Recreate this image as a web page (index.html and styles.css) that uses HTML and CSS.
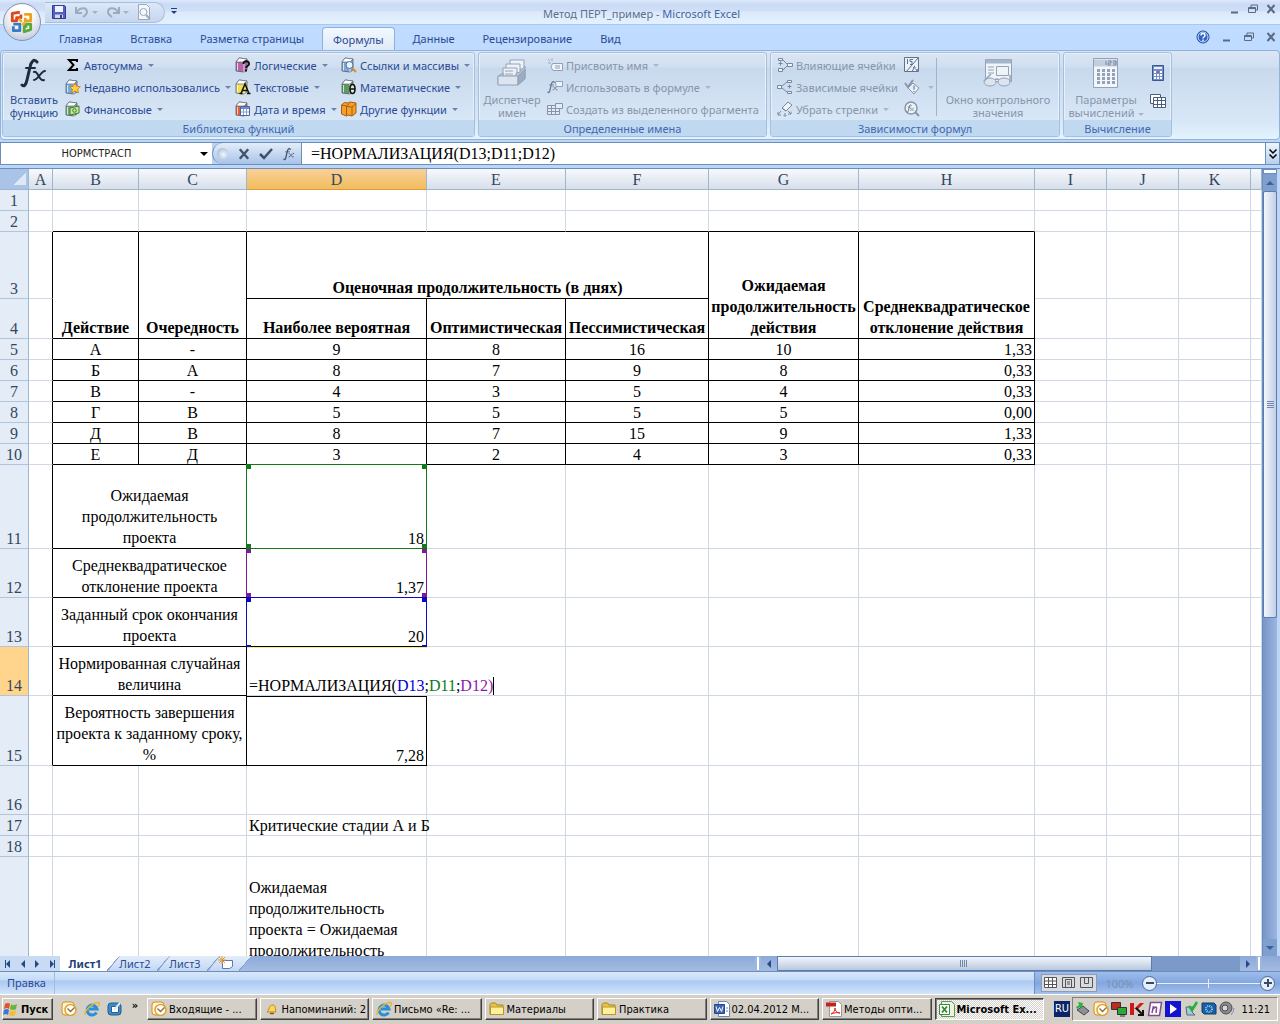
FILE: index.html
```html
<!DOCTYPE html>
<html lang="ru">
<head>
    <meta charset="UTF-8">
    <meta name="viewport" content="width=device-width, initial-scale=1.0">
    <title>Метод ПЕРТ_пример - Microsoft Excel</title>
    <link rel="stylesheet" href="styles.css">
</head>
<body>

<!-- Shared icons -->
<svg class="sprite" aria-hidden="true">
    <symbol id="book" viewBox="0 0 16 16">
        <path d="M1 5l3-4 8 1v11l-3 2-8-1z" fill="currentColor" stroke="#555b70" stroke-width=".8"/>
        <path d="M1 5l3-4 8 1-3 3z" fill="#fff" stroke="#666c80" stroke-width=".7"/>
        <path d="M2.500 6v7.500M9 5v10" stroke="#fff" stroke-width="1" opacity=".7"/>
    </symbol>
    <symbol id="fx" viewBox="0 0 28 30">
        <path d="M17 4c-3-4-6 0-7 5L7 22c-1 5-3 7-5 5" fill="none" stroke="currentColor" stroke-width="3" stroke-linecap="round"/>
        <path d="M6 10h9M14 14c4-2 5 10 10 8M25 13c-4 0-7 9-11 9" fill="none" stroke="currentColor" stroke-width="2" stroke-linecap="round"/>
    </symbol>
    <symbol id="outlook" viewBox="0 0 16 16">
        <rect x="1" y="1" width="12" height="13" rx="3" fill="#fff3d2" stroke="#d98b1f"/>
        <circle cx="9.500" cy="9" r="5.500" fill="#fff" stroke="#e6a12c" stroke-width="1.500"/>
        <path d="M6.500 7.500l3 3 4-4" fill="none" stroke="#8b6a35" stroke-width="1.300"/>
    </symbol>
    <symbol id="ie" viewBox="0 0 16 16">
        <path d="M12.500 11.500A5 5 0 1 1 13 8H5" fill="none" stroke="#2a8fd8" stroke-width="3"/>
        <path d="M1 14C0 10 9 1 15 1.500c1 1 0 3-1 4" fill="none" stroke="#e8b62e" stroke-width="1.400"/>
    </symbol>
    <symbol id="folder" viewBox="0 0 16 16">
        <path d="M1 3.500l1.500-1.500h4l1.500 2h6v9.500H1z" fill="#e9c440" stroke="#a98620"/>
        <path d="M1.500 13.500V6h13v7.500z" fill="#ffef9c" stroke="#b8952c"/>
    </symbol>
    <symbol id="min" viewBox="0 0 10 10"><path d="M1 8.500h7" stroke="currentColor" stroke-width="2"/></symbol>
    <symbol id="restore" viewBox="0 0 10 10">
        <path d="M3 3V1h6.500v5H7.500" fill="none" stroke="currentColor"/>
        <path d="M.5 3.500h7v5h-7zM.5 4.500h7" fill="none" stroke="currentColor"/>
    </symbol>
    <symbol id="close" viewBox="0 0 10 10"><path d="M1.500 1l7 8M8.500 1l-7 8" stroke="currentColor" stroke-width="2"/></symbol>
</svg>

<!-- Title bar -->
<header class="titlebar">
    <button class="office-btn" aria-label="Office">
        <svg viewBox="0 0 24 24" width="26" height="26" fill="none" stroke-width="2.600" stroke-linejoin="round">
            <path d="M10 3L3 4v7h4V8h4V5" stroke="#dc4a1c"/>
            <path d="M14 5h6v6h-5V8" stroke="#f0a21e"/>
            <path d="M4 14h6v6H4v-4" stroke="#3a78c8"/>
            <path d="M14 14h6v5l-6 2v-5h3" stroke="#5aa83a"/>
            <path d="M9 9l3 3M15 12l-3 3" stroke="#e8b33c"/>
        </svg>
    </button>
    <div class="quick-access">
        <button aria-label="Сохранить">
            <svg width="16" height="16" viewBox="0 0 16 16"><path d="M1.500 1.500h12l1 1v12h-13z" fill="#5560c0" stroke="#343a90"/><path d="M4 2h8v6H4z" fill="#eef2ff"/><path d="M4 10.500h8V14H4z" fill="#d5d9ee"/><path d="M9 11h2v3H9z" fill="#343a90"/></svg>
        </button>
        <button disabled aria-label="Отменить">
            <svg width="16" height="16" viewBox="0 0 16 16"><path d="M2 3v6h6M3 8c3-5 10-5 10 0 0 2-1 3-4 5" fill="none" stroke="#9cabc4" stroke-width="2"/></svg>
            <i class="caret"></i>
        </button>
        <button disabled aria-label="Вернуть">
            <svg width="16" height="16" viewBox="0 0 16 16"><path d="M14 3v6H8M13 8C10 3 3 3 3 8c0 2 1 3 4 5" fill="none" stroke="#9cabc4" stroke-width="2"/></svg>
            <i class="caret"></i>
        </button>
        <button disabled aria-label="Просмотр">
            <svg width="16" height="16" viewBox="0 0 16 16" fill="#f4f7fb" stroke="#9aa8bd"><path d="M2.500.5h8l3 3v12h-11z"/><circle cx="7.500" cy="8" r="3.500"/><path d="M10 11l4 4" stroke-width="2"/></svg>
        </button>
    </div>
    <button class="customize" aria-label="Настройка панели"><i class="caret dark"></i></button>
    <h1 class="title">Метод ПЕРТ_пример - <span>Microsoft Excel</span></h1>
    <div class="win-buttons">
        <button aria-label="Свернуть"><svg width="10" height="10"><use href="#min"/></svg></button>
        <button aria-label="Восстановить"><svg width="10" height="10"><use href="#restore"/></svg></button>
        <button aria-label="Закрыть"><svg width="10" height="10"><use href="#close"/></svg></button>
    </div>
</header>

<!-- Ribbon tabs -->
<nav class="tabs">
    <a href="#">Главная</a>
    <a href="#">Вставка</a>
    <a href="#">Разметка страницы</a>
    <a href="#" class="active">Формулы</a>
    <a href="#">Данные</a>
    <a href="#">Рецензирование</a>
    <a href="#">Вид</a>
    <div class="win-buttons doc">
        <button aria-label="Справка">
            <svg width="14" height="14" viewBox="0 0 14 14"><circle cx="7" cy="7" r="6" fill="#2d64c8" stroke="#1d3f8f"/><circle cx="7" cy="7" r="5" fill="none" stroke="#cfe0ff"/><path d="M5 5.500c0-3 4-2.500 4 0 0 1.500-2 1.500-2 3M7 9.500v1.500" fill="none" stroke="#fff" stroke-width="1.500"/></svg>
        </button>
        <button aria-label="Свернуть окно"><svg width="10" height="10"><use href="#min"/></svg></button>
        <button aria-label="Восстановить окно"><svg width="10" height="10"><use href="#restore"/></svg></button>
        <button aria-label="Закрыть окно"><svg width="10" height="10"><use href="#close"/></svg></button>
    </div>
</nav>

<!-- Ribbon -->
<div class="ribbon">
    <section class="group library">
        <div class="group-body">
            <button class="big"><svg width="28" height="30" class="ink"><use href="#fx"/></svg>Вставить<br>функцию</button>
            <div class="col col-main">
                <button><svg width="16" height="16" viewBox="0 0 16 16"><path d="M12 5V3H4l4.500 5L4 13h8v-2" fill="none" stroke="#000" stroke-width="2"/></svg>Автосумма<i class="caret"></i></button>
                <button><svg width="16" height="16" viewBox="0 0 16 16"><use href="#book" color="#6fb0e0"/><path d="M10 4l1.700 3.300 3.600.4-2.700 2.500.8 3.800-3.400-2-3.400 2 .8-3.800-2.700-2.500 3.600-.4z" fill="#ffd23c" stroke="#c8741c" stroke-width=".8"/></svg>Недавно использовались<i class="caret"></i></button>
                <button><svg width="16" height="16" viewBox="0 0 16 16"><use href="#book" color="#6fb070"/><path d="M5 7l9-2v7l-9 2z" fill="#c8e89a" stroke="#3d7a35"/><circle cx="9.500" cy="9.500" r="1.800" fill="none" stroke="#3d7a35"/></svg>Финансовые<i class="caret"></i></button>
            </div>
            <div class="col col-logic">
                <button><svg width="16" height="16" viewBox="0 0 16 16"><use href="#book" color="#b565a8"/><path d="M8.500 7c0-4 5.500-3.500 5.500 0 0 2-3 2-3 4M11 12.500v2" fill="none" stroke="#111" stroke-width="2"/></svg>Логические<i class="caret"></i></button>
                <button><svg width="16" height="16" viewBox="0 0 16 16"><use href="#book" color="#f2e04a"/><path d="M6 14.500L10 5l4 9.500M7.500 11.500h5M4.500 14.500h3M12 14.500h3.500" fill="none" stroke="#111" stroke-width="1.500"/></svg>Текстовые<i class="caret"></i></button>
                <button><svg width="16" height="16" viewBox="0 0 16 16"><use href="#book" color="#e0603a"/><path d="M5.500 5.500h9v9h-9z" fill="#fff" stroke="#4a64a0"/><path d="M6 7h8" stroke="#6c8ed0" stroke-width="2"/><path d="M8.500 8v6M11.500 8v6M6 11h8" stroke="#8aa0c8"/></svg>Дата и время<i class="caret"></i></button>
            </div>
            <div class="col">
                <button><svg width="16" height="16" viewBox="0 0 16 16"><use href="#book" color="#7fa8d8"/><circle cx="8.500" cy="8" r="3.500" fill="#e3f3ff" stroke="#54719c"/><path d="M11 11l4 4" stroke="#d98a2e" stroke-width="2"/></svg>Ссылки и массивы<i class="caret"></i></button>
                <button><svg width="16" height="16" viewBox="0 0 16 16"><use href="#book" color="#5c9a62"/><ellipse cx="11.500" cy="10" rx="2.500" ry="4.500" fill="#d8ecd8" stroke="#111" stroke-width="1.600"/><path d="M9 10h5" stroke="#111" stroke-width="1.300"/></svg>Математические<i class="caret"></i></button>
                <button><svg width="16" height="16" viewBox="0 0 16 16"><path d="M.5 4l3-2.500 3 .5 3-1 5.500 1v10l-4 3-4-1-1.500 1L.5 13z" fill="#f5a02c" stroke="#a85c10"/><path d="M.5 4l5 1 3-2.500M5.500 5v9.500M6 5.500l5 .5 4-3.500M11 6v9" fill="none" stroke="#a85c10"/></svg>Другие функции<i class="caret"></i></button>
            </div>
        </div>
        <h2>Библиотека функций</h2>
    </section>

    <section class="group names off">
        <div class="group-body">
            <button class="big" disabled>
                <svg width="32" height="30" viewBox="0 0 32 30" fill="#eef3f9" stroke="#93a2b8"><path d="M14 2h14v9H14z"/><path d="M10 6h14v9H10z"/><path d="M7 10h14v9H7zM9 13h8M9 16h8"/><path d="M2 18l5-3v3h13v-3h3l6-7v12l-6 6H2z" fill="#c3cedd"/><path d="M2 18h20v9H2z" fill="#dce4ee"/><path d="M22 18l7-7v10l-7 6z" fill="#9dabc0"/></svg>
                Диспетчер<br>имен</button>
            <div class="col">
                <button disabled><svg width="16" height="16" viewBox="0 0 16 16" fill="#f1f5fa" stroke="#8fa0b8"><path d="M5.500 6.500h10v7H6l-2-3.500zM8 9h5M8 11h5"/><path d="M1 2l2 2M5 1v3M1 6h3" stroke-width=".8"/></svg>Присвоить имя<i class="caret"></i></button>
                <button disabled><svg width="16" height="16" viewBox="0 0 16 16"><use href="#fx" width="12" height="14" y="1" color="#687990"/><path d="M8.500 2.500h7v5H9z" fill="#f1f5fa" stroke="#8fa0b8"/></svg>Использовать в формуле<i class="caret"></i></button>
                <button disabled><svg width="16" height="16" viewBox="0 0 16 16" fill="#e3eaf3" stroke="#8494ac"><path d="M.5 4.500h12v9H.5zM.5 7.500h12M.5 10.500h12M4.500 4.500v9M8.500 4.500v9"/><path d="M8.500 2.500h7v5h-7z"/></svg>Создать из выделенного фрагмента</button>
            </div>
        </div>
        <h2>Определенные имена</h2>
    </section>

    <section class="group audit off">
        <div class="group-body">
            <div class="col col-audit">
                <button disabled><svg width="16" height="16" viewBox="0 0 16 16" fill="#f1f5fa" stroke="#7487a3"><path d="M1.500 1.500h4v2h-4zM1.500 6.500h4M3.500 4.500v4M1.500 11.500h4v3h-4zM10.500 6.500h5v3h-5zM6 3l4 4M6 13l4-4"/></svg>Влияющие ячейки</button>
                <button disabled><svg width="16" height="16" viewBox="0 0 16 16" fill="#f1f5fa" stroke="#7487a3"><path d="M10.500 1.500h4v2h-4zM10.500 7.500h4M12.500 5.500v4M10.500 12.500h4v2h-4zM.5 6.500h4v3h-4zM5 7l5-4M5 9l5 4"/></svg>Зависимые ячейки</button>
                <button disabled><svg width="16" height="16" viewBox="0 0 16 16" fill="#f1f5fa" stroke="#7487a3"><path d="M5 7l6-6 4 3-6 6zM5 7l4 3M4 10l-3 4M1 11v3h3M8 12v3M6.500 14L8 15.500 9.500 14M11 10l3 3M14 10.500V13h-3"/></svg>Убрать стрелки<i class="caret"></i></button>
            </div>
            <div class="col col-checks">
                <button disabled aria-label="Показать формулы"><svg width="16" height="16" viewBox="0 0 16 16" fill="none" stroke="#60728f"><path d="M.5.5h14v14H.5z" fill="#eaf0f7"/><path d="M2 15L14 1M3.500 2v5M9 2.500H6v2h2v3H6M8 14c2 0 1-5 3-5M9 11h3M12 12l2 3M14 12l-2 3"/></svg></button>
                <button disabled aria-label="Проверка ошибок"><svg width="16" height="16" viewBox="0 0 16 16" fill="#e8eef5" stroke="#8596ae"><path d="M4 9l5-5 6 5-5 6z"/><path d="M10 6.500v4M10 12v1" stroke-width="1.500"/><path d="M1 4l3 4 5-7" fill="none" stroke-width="2"/></svg><i class="caret"></i></button>
                <button disabled aria-label="Вычислить формулу"><svg width="16" height="16" viewBox="0 0 16 16"><circle cx="7" cy="7" r="6" fill="#eef3f8" stroke="#8596ae" stroke-width="1.500"/><path d="M11 11l4 4" stroke="#8596ae" stroke-width="2"/><use href="#fx" x="2" y="3" width="9" height="9" color="#566984"/></svg></button>
            </div>
            <button class="big watch" disabled>
                <svg width="32" height="30" viewBox="0 0 32 30" fill="#eff4f9" stroke="#93a2b8"><path d="M3.500 1.500h26v22h-26z"/><path d="M4 3.500h25" stroke="#a5b5cb" stroke-width="4"/><path d="M6 9h6M6 12h6M6 15h6M14.500 8.500h12v9h-12z"/><ellipse cx="8" cy="24" rx="6" ry="4" fill="#dbe4ef"/><ellipse cx="22" cy="24" rx="6" ry="4" fill="#dbe4ef"/><path d="M13 22q2-2 4 0M2 23L9 16M28 23V17" fill="none" stroke-width="1.500"/></svg>
                Окно контрольного<br>значения</button>
        </div>
        <h2>Зависимости формул</h2>
    </section>

    <section class="group calc off">
        <div class="group-body">
            <button class="big" disabled>
                <svg width="26" height="30" viewBox="0 0 26 30" fill="#f3f7fb" stroke="#93a2b8"><path d="M.5.5h24v29H.5z"/><path d="M1 5h23" stroke="#c2cedd" stroke-width="7"/><path d="M13 3v4M15 3h3v2h-3v2h3M20 3h3v4h-3M20 5h3" fill="none" stroke="#7b8ba3"/><path d="M4 12.500h18M4 16.500h18M4 20.500h18M4 24.500h18" stroke-dasharray="3 2" stroke-width="3"/></svg>
                <span>Параметры<br>вычислений<i class="caret"></i></span></button>
            <div class="col col-calc">
                <button aria-label="Пересчет"><svg width="16" height="16" viewBox="0 0 16 16"><path d="M2.500.5h11v15h-11z" fill="#6f90cc" stroke="#3d558c"/><path d="M4 3h8" stroke="#e6f1ff" stroke-width="2"/><path d="M4 7h8M4 10h8M4 13h8" stroke="#fff" stroke-width="2" stroke-dasharray="2 1"/><path d="M7 7h2" stroke="#d84c4c" stroke-width="2"/></svg></button>
                <button aria-label="Вычисления на листе"><svg width="16" height="16" viewBox="0 0 16 16" fill="#fff" stroke="#4c5d7c"><path d="M.5.5h10v9H.5z"/><path d="M3.500 3.500h12v10h-12zM3.500 6.500h12M3.500 10.500h12M7.500 3.500v10M11.500 3.500v10"/></svg></button>
            </div>
        </div>
        <h2>Вычисление</h2>
    </section>
</div>

<!-- Formula bar -->
<div class="formula-bar">
    <div class="name-box">
        <input type="text" value="НОРМСТРАСП" aria-label="Имя">
        <button aria-label="Список функций"><i class="caret black"></i></button>
    </div>
    <div class="formula-tools">
        <span class="knob"></span>
        <button aria-label="Отмена"><svg width="12" height="12" viewBox="0 0 10 10"><use href="#close"/></svg></button>
        <button aria-label="Ввод"><svg width="14" height="12" viewBox="0 0 14 12"><path d="M1 6l4 4L13 1" fill="none" stroke="#3f4f68" stroke-width="2.500"/></svg></button>
        <button aria-label="Вставить функцию"><svg width="12" height="14"><use href="#fx"/></svg></button>
    </div>
    <input class="formula" type="text" value="=НОРМАЛИЗАЦИЯ(D13;D11;D12)" aria-label="Формула">
    <button class="expand" aria-label="Развернуть"><svg width="10" height="12" viewBox="0 0 10 12"><path d="M1.500 1.500L5 5l3.500-3.500M1.500 6.500L5 10l3.500-3.500" fill="none" stroke="#000" stroke-width="1.500"/></svg></button>
</div>

<!-- Worksheet -->
<main class="workspace">
    <div class="sheet">
        <table>
            <colgroup>
                <col class="w-num"><col class="w-a"><col class="w-b"><col class="w-c"><col class="w-d"><col class="w-e"><col class="w-f"><col class="w-g"><col class="w-h"><col class="w-i"><col class="w-i"><col class="w-i"><col>
            </colgroup>
            <thead>
                <tr><th class="corner"></th><th>A</th><th>B</th><th>C</th><th class="current">D</th><th>E</th><th>F</th><th>G</th><th>H</th><th>I</th><th>J</th><th>K</th><th></th></tr>
            </thead>
            <tbody>
                <tr><th>1</th><td></td><td></td><td></td><td></td><td></td><td></td><td></td><td></td><td></td><td></td><td></td><td></td></tr>
                <tr><th>2</th><td></td><td class="bb"></td><td class="bb"></td><td class="bb"></td><td class="bb"></td><td class="bb"></td><td class="bb"></td><td class="bb"></td><td></td><td></td><td></td><td></td></tr>
                <tr class="h-67"><th>3</th><td class="br"></td><td class="box head" rowspan="2">Действие</td><td class="box head" rowspan="2">Очередность</td><td class="box head" colspan="3">Оценочная продолжительность (в днях)</td><td class="box head" rowspan="2">Ожидаемая продолжительность действия</td><td class="box head" rowspan="2">Среднеквадратическое отклонение действия</td><td></td><td></td><td></td><td></td></tr>
                <tr class="h-40"><th>4</th><td class="br"></td><td class="box head">Наиболее вероятная</td><td class="box head">Оптимистическая</td><td class="box head">Пессимистическая</td><td></td><td></td><td></td><td></td></tr>
                <tr><th>5</th><td class="br"></td><td class="box mid">А</td><td class="box mid">-</td><td class="box mid">9</td><td class="box mid">8</td><td class="box mid">16</td><td class="box mid">10</td><td class="box num">1,33</td><td></td><td></td><td></td><td></td></tr>
                <tr><th>6</th><td class="br"></td><td class="box mid">Б</td><td class="box mid">А</td><td class="box mid">8</td><td class="box mid">7</td><td class="box mid">9</td><td class="box mid">8</td><td class="box num">0,33</td><td></td><td></td><td></td><td></td></tr>
                <tr><th>7</th><td class="br"></td><td class="box mid">В</td><td class="box mid">-</td><td class="box mid">4</td><td class="box mid">3</td><td class="box mid">5</td><td class="box mid">4</td><td class="box num">0,33</td><td></td><td></td><td></td><td></td></tr>
                <tr><th>8</th><td class="br"></td><td class="box mid">Г</td><td class="box mid">В</td><td class="box mid">5</td><td class="box mid">5</td><td class="box mid">5</td><td class="box mid">5</td><td class="box num">0,00</td><td></td><td></td><td></td><td></td></tr>
                <tr><th>9</th><td class="br"></td><td class="box mid">Д</td><td class="box mid">В</td><td class="box mid">8</td><td class="box mid">7</td><td class="box mid">15</td><td class="box mid">9</td><td class="box num">1,33</td><td></td><td></td><td></td><td></td></tr>
                <tr><th>10</th><td class="br"></td><td class="box mid">Е</td><td class="box mid">Д</td><td class="box mid">3</td><td class="box mid">2</td><td class="box mid">4</td><td class="box mid">3</td><td class="box num">0,33</td><td></td><td></td><td></td><td></td></tr>
                <tr class="h-84"><th>11</th><td class="br"></td><td class="box mid wrap" colspan="2">Ожидаемая<br>продолжительность<br>проекта</td><td class="box num">18<div class="range green"><i></i><i></i><i></i><i></i></div></td><td></td><td></td><td></td><td></td><td></td><td></td><td></td><td></td></tr>
                <tr class="h-49"><th>12</th><td class="br"></td><td class="box mid wrap" colspan="2">Среднеквадратическое отклонение проекта</td><td class="box num">1,37<div class="range purple"><i></i><i></i><i></i><i></i></div></td><td></td><td></td><td></td><td></td><td></td><td></td><td></td><td></td></tr>
                <tr class="h-49"><th>13</th><td class="br"></td><td class="box mid wrap" colspan="2">Заданный срок окончания проекта</td><td class="box num">20<div class="range blue"><i></i><i></i><i></i><i></i></div></td><td></td><td></td><td></td><td></td><td></td><td></td><td></td><td></td></tr>
                <tr class="h-49"><th class="current">14</th><td class="br"></td><td class="box mid wrap" colspan="2">Нормированная случайная величина</td><td class="editing" colspan="2">=НОРМАЛИЗАЦИЯ(<span class="ref-blue">D13</span>;<span class="ref-green">D11</span>;<span class="ref-purple">D12)</span></td><td></td><td></td><td></td><td></td><td></td><td></td><td></td></tr>
                <tr class="h-70"><th>15</th><td class="br"></td><td class="box mid wrap" colspan="2">Вероятность завершения проекта к заданному сроку, %</td><td class="box num bt">7,28</td><td></td><td></td><td></td><td></td><td></td><td></td><td></td><td></td></tr>
                <tr class="h-49"><th>16</th><td></td><td></td><td></td><td></td><td></td><td></td><td></td><td></td><td></td><td></td><td></td><td></td></tr>
                <tr><th>17</th><td></td><td></td><td></td><td class="spill">Критические стадии А и Б</td><td></td><td></td><td></td><td></td><td></td><td></td><td></td><td></td></tr>
                <tr><th>18</th><td></td><td></td><td></td><td></td><td></td><td></td><td></td><td></td><td></td><td></td><td></td><td></td></tr>
                <tr class="h-105"><th></th><td></td><td></td><td></td><td class="wrap">Ожидаемая продолжительность проекта = Ожидаемая продолжительность</td><td></td><td></td><td></td><td></td><td></td><td></td><td></td><td></td></tr>
            </tbody>
        </table>
    </div>
    <div class="vscroll">
        <span class="split"></span>
        <button aria-label="Вверх"><i class="arrow up"></i></button>
        <div class="thumb"><i class="grip"></i></div>
        <div class="track"></div>
        <button aria-label="Вниз"><i class="arrow down"></i></button>
    </div>
</main>

<!-- Sheet tabs and horizontal scroll -->
<div class="sheet-bar">
    <div class="sheet-nav">
        <button aria-label="Первый лист"><i class="stop"></i><i class="arrow left"></i></button>
        <button aria-label="Предыдущий лист"><i class="arrow left"></i></button>
        <button aria-label="Следующий лист"><i class="arrow right"></i></button>
        <button aria-label="Последний лист"><i class="arrow right"></i><i class="stop"></i></button>
    </div>
    <a href="#" class="sheet-tab active">Лист1</a>
    <a href="#" class="sheet-tab">Лист2</a>
    <a href="#" class="sheet-tab">Лист3</a>
    <a href="#" class="sheet-tab add" aria-label="Вставить лист"><svg width="16" height="14" viewBox="0 0 16 14"><path d="M4.500 4.500h10v6l-3 2h-7z" fill="#fff" stroke="#5c79ad"/><path d="M4 0v8M0 4h8M1 1l6 6M7 1L1 7" stroke="#e59a30"/></svg></a>
    <div class="hscroll">
        <span class="split-v"></span>
        <button aria-label="Влево"><i class="arrow left"></i></button>
        <div class="hthumb"><i class="grip-v"></i></div>
        <div class="htrack"></div>
        <button aria-label="Вправо"><i class="arrow right"></i></button>
        <span class="split-v"></span>
    </div>
</div>

<!-- Status bar -->
<footer class="status">
    <span class="mode">Правка</span>
    <div class="status-right">
        <div class="views">
            <button aria-label="Обычный"><svg width="14" height="12" viewBox="0 0 14 12"><path d="M.5.5h12v10H.5zM.5 4h12M.5 7.500h12M4.500.5v10M8.500.5v10" fill="#fff" stroke="#555"/></svg></button>
            <button aria-label="Разметка"><svg width="14" height="12" viewBox="0 0 14 12"><path d="M.5.5h12v10H.5zM3.500 2.500h6v8h-6zM5 5h3M5 7h3" fill="none" stroke="#555"/></svg></button>
            <button aria-label="Страничный"><svg width="14" height="12" viewBox="0 0 14 12"><path d="M.5.5h12v10H.5zM4.500.5v6h4v-6" fill="none" stroke="#555"/></svg></button>
        </div>
        <span class="percent">100%</span>
        <button class="zoom-btn" aria-label="Уменьшить"><svg width="10" height="10"><path d="M1 5h8" stroke="#3a4a66" stroke-width="2"/></svg></button>
        <input type="range" class="zoom" min="10" max="400" value="100" aria-label="Масштаб" disabled>
        <button class="zoom-btn" aria-label="Увеличить"><svg width="10" height="10"><path d="M1 5h8M5 1v8" stroke="#3a4a66" stroke-width="2"/></svg></button>
    </div>
</footer>

<!-- Windows taskbar -->
<div class="taskbar">
    <button class="start">
        <svg width="16" height="16" viewBox="0 0 16 16"><path d="M2 3q3-2 5 0L6 8Q4 6 1 8z" fill="#e0522a"/><path d="M8 3.500q3 1.500 6-.5l-1 5q-3 2-6 0z" fill="#6ab33e"/><path d="M1 9q3-2 5 0l-1 5q-2-2-5 0z" fill="#3a78d8"/><path d="M7 9.500q3 1.500 6-.5l-1 5q-3 2-6 0z" fill="#f0c030"/></svg>
        Пуск
    </button>
    <div class="quick-launch">
        <button aria-label="Outlook"><svg width="16" height="16"><use href="#outlook"/></svg></button>
        <button aria-label="Internet Explorer"><svg width="16" height="16"><use href="#ie"/></svg></button>
        <button aria-label="Рабочий стол"><svg width="16" height="16" viewBox="0 0 16 16"><rect x="1" y="2" width="13" height="12" rx="3" fill="#3c8cc8" stroke="#1f5c94"/><path d="M4.500 5.500h7v6h-7z" fill="#fff" stroke="#2c5f90"/><path d="M7 9l6-7" stroke="#d8e8f4" stroke-width="2"/></svg></button>
    </div>
    <span class="more">»</span>
    <div class="tasks">
        <button><svg width="16" height="16"><use href="#outlook"/></svg><span>Входящие - ...</span></button>
        <button><svg width="16" height="16" viewBox="0 0 16 16"><path d="M3 11c3-2 1-7 6-7 3 0 2 5 3 7z" fill="#ffd65a" stroke="#c08a1c"/><path d="M6 12.500h4" stroke="#8a5a10" stroke-width="1.500"/></svg><span>Напоминаний: 2</span></button>
        <button><svg width="16" height="16"><use href="#ie"/></svg><span>Письмо «Re: ...</span></button>
        <button><svg width="16" height="16"><use href="#folder"/></svg><span>Материалы</span></button>
        <button><svg width="16" height="16"><use href="#folder"/></svg><span>Практика</span></button>
        <button><svg width="16" height="16" viewBox="0 0 16 16"><path d="M4.500.5h8l3 3v12h-11z" fill="#fff" stroke="#6d84b4"/><path d="M.5 3.500h10v9H.5z" fill="#3b66b8" stroke="#26488c"/><path d="M2 5.500l1.500 5 2-4 2 4 1.500-5" fill="none" stroke="#fff"/><path d="M12 7h2M12 10h2" stroke="#6d84b4"/></svg><span>02.04.2012 M...</span></button>
        <button><svg width="16" height="16" viewBox="0 0 16 16"><path d="M3.500.5h9l3 3v12h-12z" fill="#fff" stroke="#999"/><path d="M0 1.500h10v4H0z" fill="#c8201c"/><path d="M5 13c3-1 4-4 4-6 0 3 2 5 5 5-3-1-6 0-9 1z" fill="none" stroke="#d8241c"/></svg><span>Методы опти...</span></button>
        <button class="pressed"><svg width="16" height="16" viewBox="0 0 16 16"><path d="M2.500.5h10l3 3v12h-13z" fill="#e8f4e4" stroke="#5c9a50"/><path d="M.5 3.500h10v10H.5z" fill="#fff" stroke="#3f8a3a"/><path d="M3 5.500l5 6M8 5.500l-5 6" stroke="#2f8a2f" stroke-width="1.800"/></svg><span>Microsoft Ex...</span></button>
    </div>
    <span class="lang">RU</span>
    <div class="tray">
        <svg width="16" height="16" viewBox="0 0 16 16"><path d="M2 9l6-4 6 5-5 4z" fill="#8c8f96" stroke="#44474c"/><path d="M3 1l5 1-1 5-2-1-3 2-1-2 3-2z" fill="#35b044"/></svg>
        <svg width="16" height="16"><use href="#outlook"/></svg>
        <svg width="16" height="16" viewBox="0 0 16 16"><path d="M.5 1.500h9v7h-9z" fill="#c02c20" stroke="#333"/><path d="M6.500 6.500h9v7h-9z" fill="#2fa83a" stroke="#333"/><path d="M9 15h5" stroke="#333"/></svg>
        <svg width="16" height="16" viewBox="0 0 16 16"><path d="M1 2h4v12H1zM5 8l6-6h4L9 8z" fill="#d01818"/><path d="M7 7l7 7M14 9v5H9" fill="none" stroke="#111" stroke-width="2"/></svg>
        <svg width="16" height="16" viewBox="0 0 16 16"><path d="M3.500 1.500h11l-2 13h-11z" fill="#fff" stroke="#7c4c94" stroke-width="1.500"/><path d="M5 12l1.500-7M6 8q4-4 3.500 0L9 12" fill="none" stroke="#7c4c94" stroke-width="1.500"/></svg>
        <svg width="16" height="16" viewBox="0 0 16 16"><path d="M0 0h16v16H0z" fill="#1414d0"/><path d="M5 3l7 5-7 5z" fill="#fff"/></svg>
        <svg width="16" height="16" viewBox="0 0 16 16"><path d="M3 6h7l-1 5 3 3H4z" fill="#a8c8dc" stroke="#4c6c80"/><path d="M6 5l3 4 5-8" fill="none" stroke="#22b03a" stroke-width="2.500"/></svg>
        <svg width="16" height="16" viewBox="0 0 16 16"><path d="M1 2h12l2 2v9H3l-2-2z" fill="#1c5fa4" stroke="#123a68"/><circle cx="8" cy="8" r="3" fill="none" stroke="#8cd0f4" stroke-dasharray="1 1" stroke-width="2"/></svg>
        <svg width="16" height="16" viewBox="0 0 16 16"><circle cx="7" cy="7" r="6" fill="#8c8c90" stroke="#4c4c50"/><circle cx="6" cy="7" r="3" fill="#d8d8dc" stroke="#4c4c50"/><path d="M12 14q3-3 3-7" fill="none" stroke="#888cc0"/></svg>
        <time>11:21</time>
    </div>
</div>

</body>
</html>
```
FILE: styles.css
```css
/* General */
* {
    box-sizing: border-box;
}

body {
    margin: 0;
    height: 100vh;
    display: flex;
    flex-direction: column;
    overflow: hidden;
    background-color: #bdd6f7;
    font-family: 'Noto Sans', 'Open Sans', sans-serif;
    font-size: 11px;
    color: #2b4a94;
}

button {
    font: inherit;
    color: inherit;
    background: none;
    border: none;
    margin: 0;
    padding: 0;
}

a {
    color: inherit;
    text-decoration: none;
}

svg {
    flex: none;
}

.sprite {
    display: none;
}

.caret {
    flex: none;
    border: 3px solid transparent;
    border-top-color: #6d83ad;
    border-bottom: none;
    margin-left: 5px;
}

.caret.dark {
    border-top-color: #23407e;
    margin: 0;
}

.caret.black {
    border-width: 4px;
    border-bottom: none;
    border-top-color: #000;
    margin: 0;
}

/* Title bar */
.titlebar {
    position: relative;
    flex: none;
    height: 25px;
    display: flex;
    align-items: center;
    padding: 0 4px 0 45px;
    background: linear-gradient(#dce9fa 0, #cbdbf4 4px, #cfdff6 11px, #dbe9fb 12px, #e3f1ff 100%);
    border-bottom: 1px solid #a9c8f0;
}

.office-btn {
    position: absolute;
    left: 3px;
    top: 3px;
    z-index: 2;
    width: 38px;
    height: 38px;
    border: 1px solid #8495b2;
    border-radius: 50%;
    background: radial-gradient(circle at 50% 30%, #fff 30%, #d3d9e4 70%, #a9b6ca);
    display: flex;
    align-items: center;
    justify-content: center;
}

.quick-access {
    display: flex;
    align-items: center;
    gap: 7px;
    width: 120px;
    height: 21px;
    padding-left: 6px;
    border: 1px solid #a9bfde;
    border-left: none;
    border-radius: 0 11px 11px 0;
    background: linear-gradient(#dde8f7, #c5d6ee);
}

.quick-access button {
    display: flex;
    align-items: center;
}

.quick-access .caret {
    margin-left: 2px;
    border-top-color: #a3b2ca;
}

.customize {
    width: 18px;
    height: 12px;
    display: flex;
    justify-content: center;
    align-items: center;
}

.customize .caret {
    position: relative;
}

.customize .caret::before {
    content: "";
    position: absolute;
    left: -3px;
    top: -6px;
    width: 6px;
    height: 1px;
    background: #23407e;
}

.title {
    flex: 1;
    margin: 0;
    padding-right: 130px;
    padding-top: 3px;
    text-align: center;
    font-size: 11px;
    font-weight: normal;
    color: #5f6f8c;
}

.title span {
    color: #44649f;
}

.win-buttons {
    display: flex;
    align-items: center;
    gap: 8px;
    color: #5b6b85;
    padding-bottom: 6px;
}

.win-buttons button {
    display: flex;
}

/* Ribbon tabs */
.tabs {
    flex: none;
    height: 25px;
    display: flex;
    align-items: flex-end;
    padding: 0 4px 0 45px;
    background: #bfdbff;
}

.tabs > a {
    height: 23px;
    line-height: 23px;
    padding: 0 14px;
}

.tabs > a.active {
    padding: 0 10px;
    margin: 0 4px;
    background: linear-gradient(#f2f8ff, #dfeaf8);
    border: 1px solid #8fb0dd;
    border-bottom: none;
    border-radius: 4px 4px 0 0;
}

.win-buttons.doc {
    margin-left: auto;
    gap: 12px;
}

/* Ribbon */
.ribbon {
    flex: none;
    display: flex;
    gap: 3px;
    height: 90px;
    padding: 1px 2px 2px 1px;
    border: 1px solid #8fb3df;
    border-radius: 4px;
    background: linear-gradient(#dbe6f4 0, #d0dff0 16px, #c8d9ed 17px, #d9e8f7 72px, #e3f3ff 100%);
}

.group {
    display: flex;
    flex-direction: column;
    flex: none;
    border: 1px solid #a5c0df;
    border-radius: 3px;
    box-shadow: inset 0 0 0 1px #e6f1fc;
    overflow: hidden;
}

.group.library { width: 473px; }
.group.names { width: 289px; }
.group.audit { width: 290px; }
.group.calc { width: 109px; }

.group-body {
    flex: 1;
    min-height: 0;
    display: flex;
}

.group h2 {
    flex: none;
    margin: 0;
    height: 16px;
    line-height: 17px;
    text-align: center;
    font-size: 11px;
    font-weight: normal;
    color: #3f68b0;
    background: #c1d8f1;
}

.big {
    display: flex;
    flex-direction: column;
    align-items: center;
    padding: 5px 2px 0;
    line-height: 13px;
    white-space: nowrap;
}

.big svg {
    margin-bottom: 5px;
}

.big .caret {
    display: inline-block;
    margin-left: 3px;
    vertical-align: middle;
}

.library .big { width: 60px; padding-left: 4px; }
.names .big { width: 66px; }
.calc .big { width: 84px; }

.watch {
    flex: 1;
    margin: 5px 0 4px;
    padding-top: 0;
    border-left: 1px solid #9db4d1;
}

.ink {
    color: #1d2b3c;
}

.col {
    display: flex;
    flex-direction: column;
    padding-top: 1px;
}

.col button {
    display: flex;
    align-items: center;
    height: 22px;
    white-space: nowrap;
}

.col button svg {
    margin: 0 3px 0 2px;
}

.col-main { width: 170px; }
.col-logic { width: 106px; }
.col-audit { width: 128px; padding-left: 4px; }
.col-checks { width: 37px; padding-left: 3px; }
.col-calc { padding-top: 9px; gap: 7px; }

.off button {
    color: #8795ab;
}

.off .caret {
    border-top-color: #a9b6c8;
}

/* Formula bar */
.formula-bar {
    flex: none;
    display: flex;
    height: 23px;
    margin-top: 2px;
    border: 1px solid #6b8ebb;
    background: #bcd2ee;
}

.name-box {
    display: flex;
    align-items: center;
    width: 211px;
    padding-right: 4px;
    background: #fff;
}

.name-box button {
    display: flex;
}

.name-box input {
    flex: 1;
    min-width: 0;
    border: none;
    padding: 0 8px 0 0;
    text-align: center;
    font: 11px 'DejaVu Sans Condensed', sans-serif;
    color: #222;
    background: none;
}

.formula-tools {
    display: flex;
    align-items: center;
    justify-content: space-between;
    width: 89px;
    padding: 0 6px 0 4px;
    border-radius: 11px 0 0 11px;
    border-left: 1px solid #6b8ebb;
    background: linear-gradient(#e4edf9, #a9c3e9);
    color: #45536b;
}

.formula-tools button {
    display: flex;
}

.knob {
    width: 11px;
    height: 11px;
    border-radius: 50%;
    background: radial-gradient(circle at 60% 60%, #f2f7fd, #97abcb);
}

.formula {
    flex: 1;
    min-width: 0;
    border: none;
    border-left: 1px solid #6b8ebb;
    padding: 0 9px;
    font: 16px 'Liberation Serif', serif;
    color: #000;
    background: #fff;
}

.expand {
    width: 14px;
    display: flex;
    align-items: center;
    justify-content: center;
    border-left: 1px solid #6b8ebb;
    background: linear-gradient(#eef5fd, #b7cfee);
}

/* Worksheet */
.workspace {
    flex: 1;
    min-height: 0;
    display: flex;
    margin-top: 3px;
    padding-right: 3px;
    border-top: 1px solid #6b8ebb;
}

.sheet {
    flex: 1;
    min-width: 0;
    overflow: hidden;
    background: #fff;
}

table {
    width: 100%;
    min-width: 1260px;
    table-layout: fixed;
    border-collapse: separate;
    border-spacing: 0;
    font: 16px/18px 'Liberation Serif', serif;
    color: #000;
}

.w-num { width: 29px; }
.w-a { width: 24px; }
.w-b { width: 86px; }
.w-c { width: 108px; }
.w-d { width: 180px; }
.w-e { width: 139px; }
.w-f { width: 143px; }
.w-g { width: 150px; }
.w-h { width: 176px; }
.w-i { width: 72px; }

th {
    height: 21px;
    padding: 0;
    font-weight: normal;
    vertical-align: bottom;
    color: #33475c;
    background: #e4ecf7;
    border-right: 1px solid #9eb6ce;
    border-bottom: 1px solid #b3c4da;
}

thead th {
    background: linear-gradient(#f7f9fc, #d7dfea);
    border-bottom-color: #9eb6ce;
}

th.current {
    background: #ffd58d;
}

thead th.current {
    background: linear-gradient(#f9d099, #f1bd5c);
    border-bottom-color: #e0973a;
}

th.corner {
    background: linear-gradient(135deg, transparent 50%, #dfe9f6 50%) 12px 4px / 14px 12px no-repeat, #aac4e9;
}

td {
    position: relative;
    height: 21px;
    padding: 0 2px;
    vertical-align: bottom;
    border-right: 1px solid #d0d7e5;
    border-bottom: 1px solid #d0d7e5;
}

.br { border-right-color: #000; }
.bb { border-bottom-color: #000; }
.bt { border-top: 1px solid #000; }

.box {
    border-right-color: #000;
    border-bottom-color: #000;
}

.head {
    text-align: center;
    font-weight: bold;
    line-height: 21px;
}

.mid { text-align: center; }
.num { text-align: right; }
.wrap { line-height: 21px; }
.spill { white-space: nowrap; }

.h-40 > * { height: 40px; }
.h-49 > * { height: 49px; }
.h-67 > * { height: 67px; }
.h-70 > * { height: 70px; }
.h-84 > * { height: 84px; }
.h-105 > * { height: 105px; }

.editing {
    white-space: nowrap;
    background: linear-gradient(#f4f26a, #f4f26a) 0 0 / 180px 1px no-repeat;
}

.editing::after {
    content: "";
    display: inline-block;
    width: 1px;
    height: 18px;
    vertical-align: bottom;
    background: #000;
}

.ref-blue { color: #0000d8; }
.ref-green { color: #0b7a1b; }
.ref-purple { color: #8a1aa8; }

/* Coloured frames around the cells used in the formula */
.range {
    position: absolute;
    inset: -1px;
    border: 1px solid;
}

.range i {
    position: absolute;
    width: 5px;
    height: 5px;
    background: currentColor;
}

.range i:nth-child(1) { left: -1px; top: -1px; }
.range i:nth-child(2) { right: -1px; top: -1px; }
.range i:nth-child(3) { left: -1px; bottom: -1px; }
.range i:nth-child(4) { right: -1px; bottom: -1px; }

.range.green {
    z-index: 1;
    color: #117a18;
}

.range.purple { color: #7d1a9c; }

.range.blue {
    color: #0a0ac0;
    border-bottom-color: #000;
}

.range.blue i:nth-child(n+3) {
    height: 2px;
}

/* Scroll bars */
.arrow {
    border: 4px solid transparent;
}

.arrow.up { border-bottom-color: #3d5f99; border-top: none; }
.arrow.down { border-top-color: #3d5f99; border-bottom: none; }
.arrow.left { border-right-color: #26478a; border-left: none; }
.arrow.right { border-left-color: #26478a; border-right: none; }

.vscroll {
    flex: none;
    width: 15px;
    display: flex;
    flex-direction: column;
    background: #7f9fcf;
    border-left: 1px solid #6b8ebb;
}

.vscroll button {
    height: 17px;
    display: flex;
    align-items: center;
    justify-content: center;
}

.split {
    height: 5px;
    background: #fff;
    border: 1px solid #6b8ebb;
}

.thumb {
    flex: 427;
    display: flex;
    align-items: center;
    justify-content: center;
    border: 1px solid #5b7cb0;
    border-radius: 2px;
    background: linear-gradient(90deg, #f2f6fc, #c2d0e6);
}

.track {
    flex: 322;
    background: linear-gradient(90deg, #7695c8, #9cb6df);
}

.grip {
    width: 7px;
    height: 7px;
    background: repeating-linear-gradient(#7487a8 0 1px, transparent 1px 2px);
}

.grip-v {
    width: 8px;
    height: 7px;
    background: repeating-linear-gradient(90deg, #7487a8 0 1px, transparent 1px 2px);
}

/* Sheet tabs */
.sheet-bar {
    flex: none;
    height: 16px;
    display: flex;
    background: linear-gradient(#8ca9d8, #a4bce2);
    border-bottom: 1px solid #6b8ebb;
}

.sheet-nav {
    display: flex;
    width: 60px;
    justify-content: space-around;
    background: #c9dbf3;
}

.sheet-nav button {
    display: flex;
    align-items: center;
}

.stop {
    width: 1px;
    height: 8px;
    background: #26478a;
}

.sheet-tab {
    position: relative;
    width: 60px;
    margin-right: -10px;
    padding-right: 10px;
    text-align: center;
    line-height: 15px;
    background: linear-gradient(#e3edfa, #c3d7f2);
    clip-path: polygon(0 0, 100% 0, 80% 100%, 0 100%);
}

.sheet-tab:nth-of-type(1) { z-index: 3; }
.sheet-tab:nth-of-type(2) { z-index: 2; }
.sheet-tab:nth-of-type(3) { z-index: 1; }

.sheet-tab:not(.active) {
    padding-right: 12px;
    padding-left: 2px;
}

/* slanted edge */
.sheet-tab::after {
    content: "";
    position: absolute;
    inset: 0 0 0 auto;
    width: 13px;
    background: linear-gradient(to bottom right, transparent 46%, #7f9ccc 47%, #7f9ccc 53%, transparent 54%);
}

.sheet-tab.active {
    background: #fff;
    color: #1f3f7c;
    font-weight: bold;
}

.sheet-tab.add {
    width: 42px;
    margin-right: 0;
}

/* keep the slant the same on the narrow tab */
.sheet-tab.add {
    clip-path: polygon(0 0, 100% 0, 71% 100%, 0 100%);
}

.hscroll {
    display: flex;
    align-items: stretch;
    margin-left: auto;
    width: 41%;
    padding-right: 18px;
}

.hscroll button {
    width: 16px;
    display: flex;
    align-items: center;
    justify-content: center;
}

.split-v {
    width: 6px;
    background: #fff;
    border: 2px solid #9cb6df;
    border-width: 1px 2px;
}

.hthumb {
    flex: 375;
    display: flex;
    align-items: center;
    justify-content: center;
    border: 1px solid #5b7cb0;
    background: linear-gradient(#f2f6fc, #b9c8de);
}

.htrack {
    flex: 89;
    background: #7c9ac9;
}

/* Status bar */
.status {
    flex: none;
    height: 22px;
    display: flex;
    justify-content: space-between;
    background: linear-gradient(#d9e8fb 0, #c4dbf8 8px, #aac8f2 9px, #d3e4fb 100%);
}

.mode {
    width: 55px;
    padding-left: 7px;
    line-height: 22px;
    border-right: 1px solid #a2bde2;
}

.status-right {
    display: flex;
    align-items: center;
    width: 246px;
    padding: 0 5px 0 6px;
    border-left: 1px solid #6b8ebb;
    background: linear-gradient(#9dbdec, #82a6de 50%, #a5c2ef);
}

.views {
    display: flex;
    border: 1px solid #8b9cb8;
    background: #d8dbe0;
}

.views button {
    width: 18px;
    height: 16px;
    display: flex;
    align-items: center;
    justify-content: center;
}

.percent {
    width: 45px;
    text-align: center;
    color: #7a90b5;
}

.zoom-btn {
    width: 15px;
    height: 15px;
    border: 1px solid #4a689c;
    border-radius: 50%;
    background: #e6effb;
    display: flex;
    align-items: center;
    justify-content: center;
}

.zoom {
    appearance: none;
    flex: 1;
    min-width: 0;
    height: 9px;
    margin: 0;
    background:
        linear-gradient(#e6effb, #e6effb) center / 1px 9px no-repeat,
        linear-gradient(#e6effb, #e6effb) center / 100% 1px no-repeat;
}

.zoom::-webkit-slider-thumb {
    appearance: none;
    width: 1px;
    height: 1px;
}

/* Taskbar */
.taskbar {
    flex: none;
    height: 30px;
    display: flex;
    align-items: center;
    padding: 2px 2px 3px;
    font: 11px 'DejaVu Sans Condensed', sans-serif;
    color: #000;
    background: #d4d0c8;
    border-top: 1px solid #fff;
}

.start,
.tasks button {
    display: flex;
    align-items: center;
    height: 22px;
    border: 1px solid;
    border-color: #fff #404040 #404040 #fff;
    box-shadow: inset -1px -1px 0 #808080;
}

.start {
    width: 51px;
    gap: 2px;
    font-weight: bold;
}

.quick-launch {
    display: flex;
    gap: 7px;
    margin-left: 8px;
}

.quick-launch button {
    display: flex;
}

.more {
    width: 24px;
    text-align: center;
    font-weight: bold;
    padding-bottom: 8px;
}

.tasks {
    flex: 1;
    min-width: 0;
    display: flex;
    gap: 3px;
}

.tasks button {
    flex: 1;
    min-width: 0;
    gap: 2px;
    padding-left: 3px;
    white-space: nowrap;
}

.tasks button.pressed {
    border-color: #404040 #fff #fff #404040;
    box-shadow: inset 1px 1px 0 #808080;
    background: repeating-conic-gradient(#fff 0 25%, #d4d0c8 0 50%) 0 0 / 2px 2px;
    font-weight: bold;
}

.lang {
    width: 16px;
    height: 16px;
    margin: 0 2px 0 10px;
    line-height: 16px;
    text-align: center;
    color: #fff;
    background: #0a246a;
}

.tray {
    display: flex;
    align-items: center;
    gap: 2px;
    height: 24px;
    width: 206px;
    padding: 0 7px 0 2px;
    border: 1px solid;
    border-color: #808080 #fff #fff #808080;
}

.tray time {
    margin-left: auto;
}
```
